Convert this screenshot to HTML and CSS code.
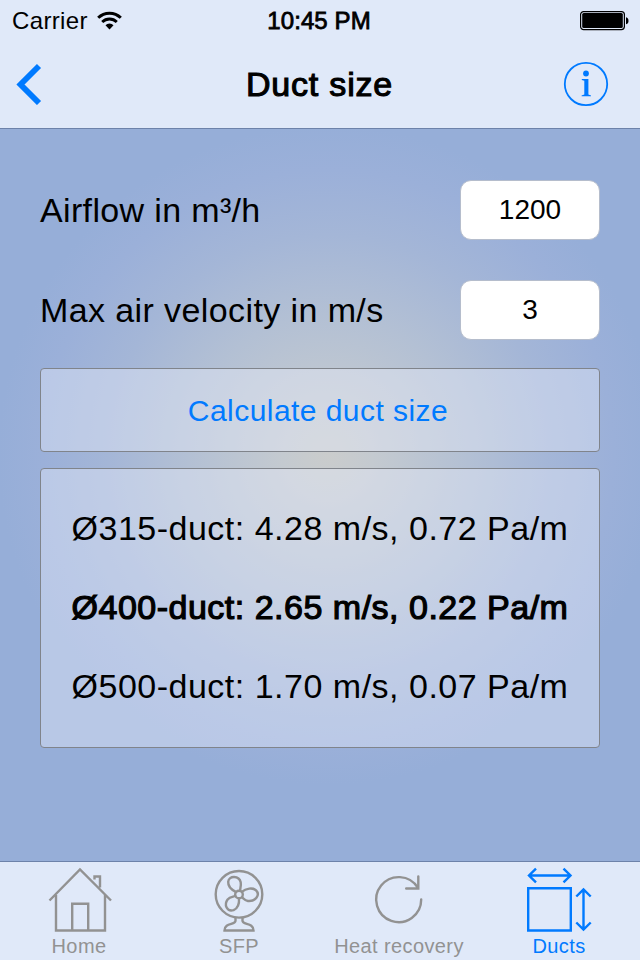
FILE: index.html
```html
<!DOCTYPE html>
<html lang="en">
<head>
<meta charset="utf-8">
<title>Duct size</title>
<link rel="stylesheet" href="styles.css">
</head>
<body>
<div class="screen">
  <header class="header">
    <div class="status">
      <div class="carrier"><span>Carrier</span>
        <svg class="wifi" width="26" height="20" viewBox="0 0 26 20" fill="none" stroke="#000">
          <path d="M1.2 6.8a16 16 0 0 1 22.6 0" stroke-width="3"/>
          <path d="M5.2 11a10.4 10.4 0 0 1 14.6 0" stroke-width="2.8"/>
          <path d="M8.5 14.2a5.8 5.8 0 0 1 8 0l-4 4.2z" fill="#000" stroke="none"/>
        </svg>
      </div>
      <div class="time">10:45 PM</div>
      <svg class="battery" width="50" height="20" viewBox="0 0 50 20">
        <rect x=".6" y=".6" width="43.800" height="18" rx="3" fill="none" stroke="#000" stroke-width="1.2"/>
        <rect x="2.2" y="2.1" width="40.600" height="15" rx="1.5"/>
        <path d="M46 6.200q2.500.5 2.500 3.500t-2.500 3.500z"/>
      </svg>
    </div>
    <nav class="navbar">
      <svg class="back" width="28" height="42" viewBox="0 0 28 42" fill="none" stroke="#007aff" stroke-width="5.8"><path d="M25 3 6.500 21.500 25 40"/></svg>
      <h1 class="title">Duct size</h1>
      <svg class="info" width="46" height="46" viewBox="0 0 46 46" fill="#007aff">
        <circle cx="23" cy="23" r="21.2" fill="none" stroke="#007aff" stroke-width="1.8"/>
        <circle cx="23" cy="12.5" r="2.9"/>
        <path d="M18.800 18h6.600v15.600l2.600.8v.9H18.600v-.9l2.700-.8V19.700l-2.500-.7z"/>
      </svg>
    </nav>
  </header>
  <main class="content">
    <div class="field"><label for="flow">Airflow in m³/h</label><input id="flow" value="1200"></div>
    <div class="field"><label class="velocity" for="vel">Max air velocity in m/s</label><input id="vel" value="3"></div>
    <button class="calculate">Calculate duct size</button>
    <section class="results">
      <p>Ø315-duct: 4.28 m/s, 0.72 Pa/m</p>
      <p class="selected">Ø400-duct: 2.65 m/s, 0.22 Pa/m</p>
      <p>Ø500-duct: 1.70 m/s, 0.07 Pa/m</p>
    </section>
  </main>
  <footer class="tabs">
    <div class="tab">
      <svg width="70" height="70" viewBox="-1 0 70 70" fill="none" stroke="currentColor" stroke-width="2.4">
        <path d="M4.500 38.500 35 7.500l31 31M11 33v35.500h49V33M27.200 68V41.700h16V68M49.500 17.500v-3h5.500v11"/>
      </svg>
      <span>Home</span>
    </div>
    <div class="tab">
      <svg width="70" height="70" viewBox="0 0 70 70" fill="none" stroke="currentColor" stroke-width="2.4">
        <circle cx="35" cy="32.300" r="23.300"/><circle cx="35" cy="32.500" r="3.800"/>
        <path d="M31.800 29.800C26.500 27.300 24 23.500 24.200 19.800c.5-6.500 11-6.500 12.500.5.600 3-.6 6.200-.6 8.500"/>
        <path d="M37.800 29.900c4-3.500 11-4.600 14.300-1.500 4.300 4.300-.3 11.300-8.200 10.600-3-.5-4.500-2.800-6.300-4"/>
        <path d="M35 36.200c.4 5.500-1.400 10.300-5.400 12-6.800 2-9.800-5.400-6-10.700 2.600-3.100 6-2.500 8.700-4"/>
        <path d="M31.500 55.500v3.200c0 4.500-11 1.500-11 9.800h29c0-8.300-11-5.300-11-9.800v-3.200"/>
      </svg>
      <span>SFP</span>
    </div>
    <div class="tab">
      <svg width="70" height="70" viewBox="0 0 70 70" fill="none" stroke="currentColor" stroke-width="2.400" stroke-linecap="round" stroke-linejoin="miter">
        <path d="M57.200 37.500A22.500 22.500 0 1 1 53.800 25.700M42.200 26.500H54.300V14.500"/>
      </svg>
      <span>Heat recovery</span>
    </div>
    <div class="tab active">
      <svg width="70" height="70" viewBox="0 0 70 70" fill="none" stroke="currentColor" stroke-width="2.400">
        <path d="M4.200 26.200h42.600v42.300H4.200zM5.500 13.500h41M12 6.700l-7 6.800 7 6.800M39.500 6.700l7 6.800-7 6.800M59.500 28v39M52.300 34.500l7.200-7 7.200 7M52.300 60.500l7.200 7 7.200-7"/>
      </svg>
      <span>Ducts</span>
    </div>
  </footer>
</div>
</body>
</html>
```
FILE: styles.css
```css
* { box-sizing: border-box; }

body {
  margin: 0;
  font-family: "Liberation Sans", Arial, sans-serif;
  color: #000;
}

.screen {
  width: 640px;
  height: 960px;
  display: flex;
  flex-direction: column;
  overflow: hidden;
  background: radial-gradient(circle at 328px 455px, #cacccc 0, #c4cad0 45px, #b3c0d4 140px, #a4b6d7 220px, #9bb0d9 285px, #96aed8 330px);
}

.header {
  height: 129px;
  background: #e0e9f9;
  border-bottom: 1px solid #6d82aa;
}

.status {
  height: 40px;
  padding: 2px 10px 0 12px;
  display: grid;
  grid-template-columns: 1fr auto 1fr;
  align-items: center;
  font-size: 24px;
}

.carrier {
  display: flex;
  align-items: center;
  gap: 9px;
  letter-spacing: 0.35px;
}

.time {
  margin-right: 4px;
  letter-spacing: 0.1px;
  -webkit-text-stroke: 0.8px #000;
}

.battery { justify-self: end; }

.navbar {
  height: 88px;
  padding: 0 31px 0 14px;
  display: grid;
  grid-template-columns: 1fr auto 1fr;
  align-items: center;
}

.title {
  margin: 0 0 0 16px;
  font-size: 34px;
  font-weight: normal;
  line-height: 40px;
  letter-spacing: 0.8px;
  -webkit-text-stroke: 1.1px #000;
}

.info { justify-self: end; }

.content {
  flex: 1;
  padding: 51px 40px 0;
}

.field {
  height: 60px;
  margin-bottom: 40px;
  display: flex;
  align-items: center;
  justify-content: space-between;
  font-size: 34px;
  letter-spacing: 0.35px;
}

.velocity { letter-spacing: 0.4px; }

.field input {
  width: 140px;
  height: 60px;
  padding: 0;
  border: 1px solid #b5bdcc;
  border-radius: 11px;
  background: #fff;
  font: 28px "Liberation Sans", Arial, sans-serif;
  text-align: center;
  color: #000;
}

.calculate {
  display: block;
  width: 560px;
  height: 84px;
  margin: -12px 0 16px;
  padding: 2px 4px 0 0;
  border: 1px solid #80848b;
  border-radius: 4px;
  background: rgba(230, 237, 250, 0.42);
  color: #007aff;
  font: 30px "Liberation Sans", Arial, sans-serif;
  letter-spacing: 0.45px;
}

.results {
  height: 280px;
  padding: 20px 0;
  border: 1px solid #80848b;
  border-radius: 4px;
  background: rgba(230, 237, 250, 0.42);
  text-align: center;
  font-size: 34px;
  line-height: 79px;
  letter-spacing: 0.5px;
  white-space: nowrap;
}

.results p { margin: 0; }

.results .selected {
  letter-spacing: 0.5px;
  -webkit-text-stroke: 1.2px #000;
}

.tabs {
  height: 99px;
  padding-right: 2px;
  display: grid;
  grid-template-columns: repeat(4, 160px);
  margin-left: 0;
  background: #e0e9f9;
  border-top: 1px solid #6d82aa;
}

.tab {
  display: flex;
  flex-direction: column;
  align-items: center;
  padding-right: 2px;
  color: #929292;
  font-size: 20px;
  line-height: 24px;
  letter-spacing: 0.4px;
}

.tab svg { display: block; margin-bottom: 2px; }
.active { color: #007aff; }
```
